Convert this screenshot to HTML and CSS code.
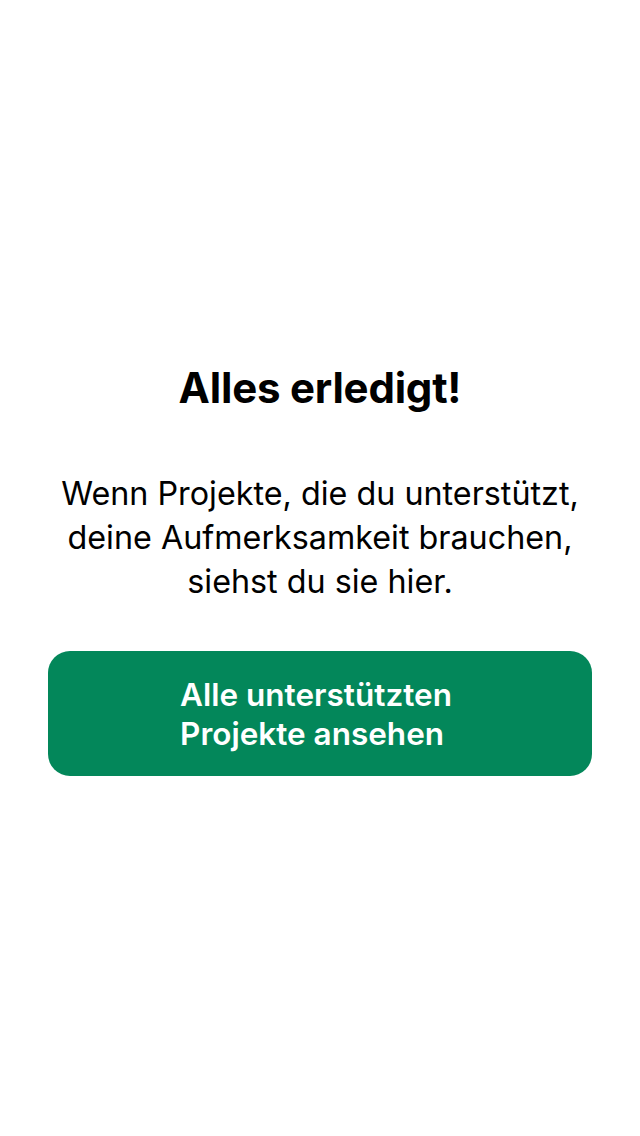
FILE: index.html
```html
<!DOCTYPE html>
<html lang="de">
<head>
<meta charset="utf-8">
<title>Alles erledigt</title>
<link rel="stylesheet" href="styles.css">
</head>
<body>
<main class="screen">
  <h1 class="title">Alles erledigt!</h1>
  <p class="message">Wenn Projekte, die du unterstützt,<br>deine Aufmerksamkeit brauchen,<br>siehst du sie hier.</p>
  <button class="action"><span class="action-label">Alle unterstützten<br>Projekte ansehen</span></button>
</main>
</body>
</html>
```
FILE: styles.css
```css
html, body {
  margin: 0;
  padding: 0;
  background: #ffffff;
}
body {
  font-family: Inter, "Noto Sans", "Liberation Sans", sans-serif;
  color: #000;
}
.screen {
  box-sizing: border-box;
  height: 1136px;
  padding: 4px 48px 0;
  display: flex;
  flex-direction: column;
  align-items: center;
  justify-content: center;
}
.title {
  margin: 0;
  font-size: 42px;
  font-weight: 700;
  line-height: 48px;
  letter-spacing: -0.2px;
}
.message {
  margin: 60px 0 0;
  font-size: 32.3px;
  font-weight: 400;
  line-height: 44px;
  text-align: center;
  letter-spacing: 0;
}
.action {
  margin-top: 47px;
  width: 100%;
  height: 125px;
  border: none;
  border-radius: 22px;
  background: #03875a;
  color: #fff;
  font-family: inherit;
  display: flex;
  align-items: center;
  justify-content: center;
  padding: 0 8px 0 0;
}
.action-label {
  text-align: left;
  font-size: 31.5px;
  font-weight: 560;
  line-height: 39px;
  letter-spacing: 0;
}
```
